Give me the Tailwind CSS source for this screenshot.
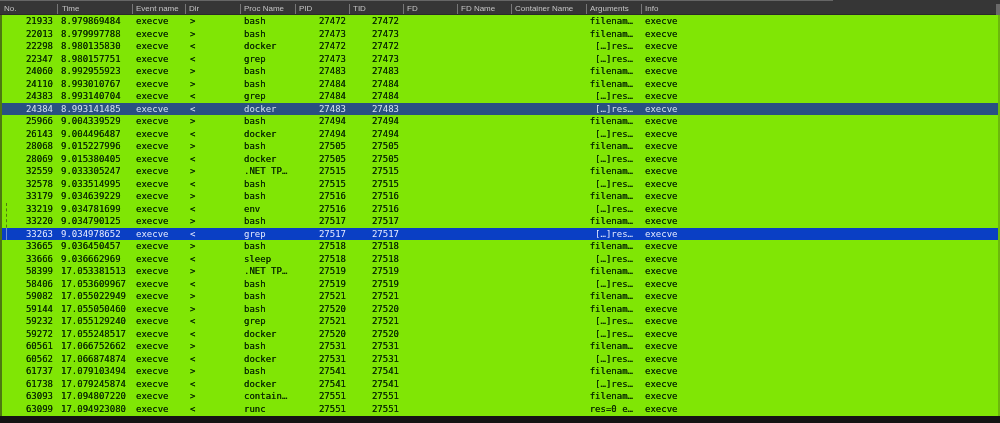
<!DOCTYPE html>
<html lang="en">
<head>
  <meta charset="UTF-8" />
  <title>Events</title>
  <script src="https://cdn.jsdelivr.net/npm/@tailwindcss/browser@4"></script>
</head>
<body class="relative bg-[#131313] h-[423px] w-[1000px] overflow-hidden">
  <div class="relative h-[15px] bg-[#363636] border-b border-[#2a2a2a] flex pt-[4px] font-['Liberation_Sans',sans-serif] text-[8px] leading-[9px] text-[#c4c4c4] blur-[0.3px]">
    <div class="absolute top-0 left-0 w-[833px] h-[1px] bg-[#666]"></div>
    <div class="absolute top-[4px] right-0 w-[4px] h-[11px] bg-[#6a6a6a]"></div>
    <div class="w-[57px] pl-[4px]">No.</div>
    <div class="w-[75px] pl-[4px] border-l border-[#777]">Time</div>
    <div class="w-[53px] pl-[3px] border-l border-[#777]">Event name</div>
    <div class="w-[55px] pl-[3px] border-l border-[#777]">Dir</div>
    <div class="w-[55px] pl-[3px] border-l border-[#777]">Proc Name</div>
    <div class="w-[54px] pl-[3px] border-l border-[#777]">PID</div>
    <div class="w-[54px] pl-[3px] border-l border-[#777]">TID</div>
    <div class="w-[54px] pl-[3px] border-l border-[#777]">FD</div>
    <div class="w-[54px] pl-[3px] border-l border-[#777]">FD Name</div>
    <div class="w-[75px] pl-[3px] border-l border-[#777]">Container Name</div>
    <div class="w-[55px] pl-[3px] border-l border-[#777]">Arguments</div>
    <div class="pl-[3px] border-l border-[#777]">Info</div>
  </div>
  <div id="rows" class="relative h-[401px] bg-[#80e605] border-l-[2px] border-l-[#4d7a10] border-r-[2px] border-r-[#6cb80c] font-['DejaVu_Sans_Mono',monospace] text-[9px] text-[#0b2e00] [text-shadow:0_0_0.6px_#0b2e00] blur-[0.3px]"></div>
  <!-- selection marks next to the row list -->
  <div class="absolute left-[6px] top-[203px] w-[1px] h-[30px] border-l border-dashed border-[#4d7a10]"></div>
  <div class="absolute left-[6px] top-[228px] w-[1px] h-[12px] bg-[#6f8fd8]"></div>
  <script>
    const data = [
      ['21933','8.979869484','>','bash','27472','27472','filenam…'],
      ['22013','8.979997788','>','bash','27473','27473','filenam…'],
      ['22298','8.980135830','<','docker','27472','27472','[…]res…'],
      ['22347','8.980157751','<','grep','27473','27473','[…]res…'],
      ['24060','8.992955923','>','bash','27483','27483','filenam…'],
      ['24110','8.993010767','>','bash','27484','27484','filenam…'],
      ['24383','8.993140704','<','grep','27484','27484','[…]res…'],
      ['24384','8.993141485','<','docker','27483','27483','[…]res…'],
      ['25966','9.004339529','>','bash','27494','27494','filenam…'],
      ['26143','9.004496487','<','docker','27494','27494','[…]res…'],
      ['28068','9.015227996','>','bash','27505','27505','filenam…'],
      ['28069','9.015380405','<','docker','27505','27505','[…]res…'],
      ['32559','9.033305247','>','.NET TP…','27515','27515','filenam…'],
      ['32578','9.033514995','<','bash','27515','27515','[…]res…'],
      ['33179','9.034639229','>','bash','27516','27516','filenam…'],
      ['33219','9.034781699','<','env','27516','27516','[…]res…'],
      ['33220','9.034790125','>','bash','27517','27517','filenam…'],
      ['33263','9.034978652','<','grep','27517','27517','[…]res…'],
      ['33665','9.036450457','>','bash','27518','27518','filenam…'],
      ['33666','9.036662969','<','sleep','27518','27518','[…]res…'],
      ['58399','17.053381513','>','.NET TP…','27519','27519','filenam…'],
      ['58406','17.053609967','<','bash','27519','27519','[…]res…'],
      ['59082','17.055022949','>','bash','27521','27521','filenam…'],
      ['59144','17.055050460','>','bash','27520','27520','filenam…'],
      ['59232','17.055129240','<','grep','27521','27521','[…]res…'],
      ['59272','17.055248517','<','docker','27520','27520','[…]res…'],
      ['60561','17.066752662','>','bash','27531','27531','filenam…'],
      ['60562','17.066874874','<','docker','27531','27531','[…]res…'],
      ['61737','17.079103494','>','bash','27541','27541','filenam…'],
      ['61738','17.079245874','<','docker','27541','27541','[…]res…'],
      ['63093','17.094807220','>','contain…','27551','27551','filenam…'],
      ['63099','17.094923080','<','runc','27551','27551','res=0 e…'],
    ];
    const rowClass = {
      '24384': 'bg-[#2a5082] text-[#d5e3f0] [text-shadow:none]',
      '33263': 'bg-[#0a3fc4] text-[#e6ecff] [text-shadow:none]',
    };
    document.getElementById('rows').innerHTML = data.map(r => `
      <div class="h-[12.5px] leading-[12.5px] flex whitespace-pre ${rowClass[r[0]] || ''}">
        <div class="w-[51px] text-right">${r[0]}</div>
        <div class="w-[75px] pl-[8px]">${r[1]}</div>
        <div class="w-[54px] pl-[8px]">execve</div>
        <div class="w-[54px] pl-[8px]">${r[2].replace('<', '&lt;').replace('>', '&gt;')}</div>
        <div class="w-[75px] pl-[8px]">${r[3]}</div>
        <div class="w-[35px] text-right">${r[4]}</div>
        <div class="w-[53px] text-right">${r[5]}</div>
        <div class="w-[234px] text-right">${r[6]}</div>
        <div class="pl-[12px]">execve</div>
      </div>`).join('');
  </script>
</body>
</html>
